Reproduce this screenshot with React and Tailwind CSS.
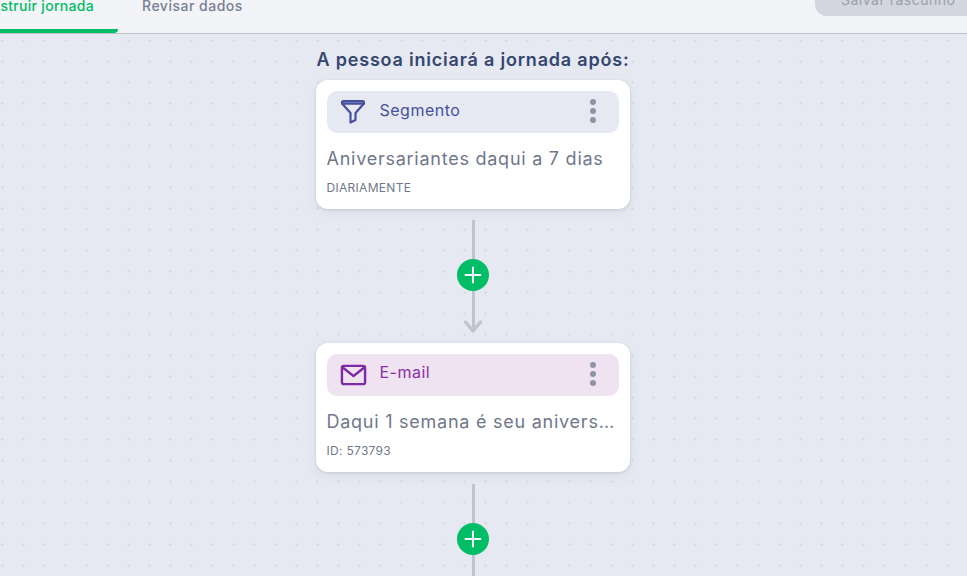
import React from 'react';

const font = { fontFamily: 'Inter, sans-serif' };

const FunnelIcon = () => (
    <svg width="26" height="26" viewBox="0 0 26 26" fill="none" stroke="#47509c" strokeWidth="2.2" strokeLinejoin="round" strokeLinecap="round">
        <path d="M2 3.500c0-.8.500-1.300 1.300-1.300h19.400c.8 0 1.300.5 1.300 1.300v1.200H2z" />
        <path d="M2.500 5 10.500 14v9.500l5-2.500v-7l8-9" />
    </svg>
);

const MailIcon = () => (
    <svg width="28" height="24" viewBox="0 0 28 24" fill="none" stroke="#7f2ba6" strokeWidth="2.500" strokeLinejoin="round" strokeLinecap="round">
        <rect x="2" y="2.500" width="24" height="19" rx="2" />
        <path d="M2.500 4 14 13 25.500 4" />
    </svg>
);

const Dots = () => (
    <div className="flex flex-col gap-[3px] w-[6px] -mt-[1px]">
        <span className="w-[6px] h-[6px] rounded-full bg-[#8d93a8]"></span>
        <span className="w-[6px] h-[6px] rounded-full bg-[#8d93a8]"></span>
        <span className="w-[6px] h-[6px] rounded-full bg-[#8d93a8]"></span>
    </div>
);

const PlusButton = () => (
    <div className="w-8 h-8 rounded-full bg-[#00bd66] flex items-center justify-center shrink-0">
        <svg width="18" height="18" viewBox="0 0 18 18" stroke="#fff" strokeWidth="2" strokeLinecap="round">
            <path d="M9 1.500v15M1.500 9h15" />
        </svg>
    </div>
);

const Card = ({ icon, title, tint, titleColor, titleShift, body, meta }) => (
    <div className="w-[314px] h-[129px] bg-white rounded-xl shadow-[0_1px_3px_rgba(120,130,160,0.28),0_4px_14px_rgba(120,130,160,0.08)] pl-[10.500px] pr-[11px] pt-[10.500px] shrink-0">
        <div className={`h-[42px] rounded-[10px] flex items-center pl-[13px] pr-[23px] ${tint}`}>
            <div className="w-[27px] flex justify-center">{icon}</div>
            <span className={`ml-[13px] flex-1 text-[16px] tracking-[0.5px] ${titleShift} ${titleColor}`}>{title}</span>
            <Dots />
        </div>
        <div className="mt-[12px] text-[18px] leading-[27px] tracking-[0.75px] text-[#6f778c] truncate">{body}</div>
        <div className="mt-[7px] text-[12px] leading-[18px] tracking-[0.3px] text-[#6f778c]">{meta}</div>
    </div>
);

export default function App() {
    return (
        <div className="w-[967px] h-[576px] overflow-hidden flex flex-col bg-[#e6e9f1] text-[#6f778c]" style={font}>
            {/* Top bar, scrolled partly out of view */}
            <div className="h-[34px] shrink-0 bg-[#f3f4f8] border-b border-[#bdc1c9] flex justify-between overflow-hidden">
                <div className="flex items-end -ml-[50px]">
                    <div className="w-[168px] h-[33px] border-b-4 border-[#00bd66] rounded-br-sm text-[#00bd66] text-[14px] font-medium leading-[12px] text-right pr-[24px] tracking-[0.3px] whitespace-nowrap">
                        Construir jornada
                    </div>
                    <div className="ml-[24px] h-[33px] text-[14px] font-medium leading-[12px] tracking-[0.5px] text-[#777e92]">Revisar dados</div>
                </div>
                <div className="w-[152px] h-[16px] bg-[#d3d6de] rounded-bl-xl text-[14px] leading-[0px] pl-[26px] tracking-[0.5px] text-[#9a9fae]">Salvar rascunho</div>
            </div>

            {/* Canvas */}
            <div className="flex-1 flex flex-col items-center pr-[21px] bg-[radial-gradient(circle,#d6dae4_1.2px,transparent_1.3px)] bg-[size:21px_21px] bg-[position:-8px_-4px]">
                <h2 className="mt-[12px] h-[28px] leading-[28px] w-[314px] text-center text-[18px] font-semibold tracking-[0.8px] text-[#354670] whitespace-nowrap">A pessoa iniciará a jornada após:</h2>
                <div className="mt-[6px]">
                    <Card
                        icon={<FunnelIcon />}
                        title="Segmento"
                        titleShift="-mt-[3px]"
                        tint="bg-[#e6e9f1]"
                        titleColor="text-[#47509c]"
                        body="Aniversariantes daqui a 7 dias"
                        meta="DIARIAMENTE"
                    />
                </div>

                {/* Connector */}
                <div className="mt-[11px] mb-[10px] flex flex-col items-center relative h-[113px] w-8">
                    <div className="w-[3px] h-[111px] bg-[#c0c4cf]"></div>
                    <div className="absolute top-[39px]"><PlusButton /></div>
                    <svg className="absolute top-[99px]" width="20" height="15" viewBox="0 0 20 15" fill="none" stroke="#c0c4cf" strokeWidth="3.500" strokeLinecap="round" strokeLinejoin="round">
                        <path d="M2.500 3 10 12l7.500-9" />
                    </svg>
                </div>

                <Card
                    icon={<MailIcon />}
                    title="E-mail"
                    titleShift="-mt-[5px]"
                    tint="bg-[#f0e3f1]"
                    titleColor="text-[#8a2fa8]"
                    body="Daqui 1 semana é seu aniversário"
                    meta="ID: 573793"
                />

                <div className="mt-[12px] flex flex-col items-center relative flex-1 w-8">
                    <div className="w-[3px] h-full bg-[#c0c4cf]"></div>
                    <div className="absolute top-[39px]"><PlusButton /></div>
                </div>
            </div>
        </div>
    );
}
